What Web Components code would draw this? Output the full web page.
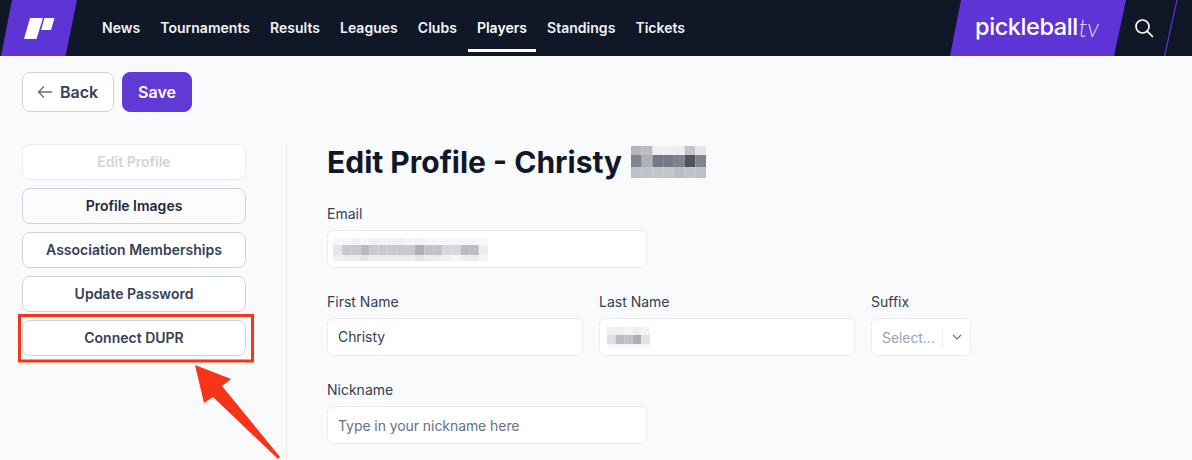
<!DOCTYPE html>
<html><head><meta charset="utf-8"><title>Edit Profile</title>
<style>
html,body{margin:0;padding:0;background:#f9fafb;height:460px;overflow:hidden;font-family:Inter,"Liberation Sans",sans-serif}
</style></head><body>
<app-header></app-header>
<page-toolbar></page-toolbar>
<profile-page></profile-page>
<call-out></call-out>
<script>
function def(name, html, after){
  customElements.define(name, class extends HTMLElement{
    connectedCallback(){
      if(this.shadowRoot) return;
      const r=this.attachShadow({mode:'open'});
      r.innerHTML=html;
      if(after) after(this,r);
    }
  });
}
function blur(w,rows){
  const h=rows.reduce((s,x)=>s+x[0],0);
  let s='',y=0;
  rows.forEach(([rh,cells])=>{
    const cw=w/cells.length;
    cells.forEach((c,i)=>{ s+=`<rect x="${(i*cw).toFixed(2)}" y="${y}" width="${cw.toFixed(2)}" height="${rh}" fill="${c}"/>`; });
    y+=rh;
  });
  return `<svg width="${w}" height="${h}" viewBox="0 0 ${w} ${h}" aria-hidden="true" style="display:block">${s}</svg>`;
}
def('app-header',`<style>
:host{display:flex;height:56px;background:#101828;align-items:stretch;color:#fff;position:relative;overflow:hidden}
.brand{width:77px;flex:none;display:flex}
nav{display:flex;gap:20px;padding-left:25px;font:600 14px/20px Inter,sans-serif;letter-spacing:.02px;flex:1}
nav a{display:flex;align-items:center;height:56px;box-sizing:border-box;position:relative;color:#f3f4f6}
nav a.on{color:#fff}
nav a.on::after{content:"";position:absolute;left:-9px;right:-9px;bottom:4px;height:3px;background:#fff}
.tv{width:176px;flex:none;background:#5f34d6;clip-path:polygon(11px 0,176px 0,164px 56px,0 56px);display:flex;align-items:center;padding:0 0 2px 25px;box-sizing:border-box}
.tv b{font:500 23.500px/24px Inter,sans-serif;letter-spacing:-.4px;color:#fff}
.tv i{font:300 italic 25px/24px Lato,sans-serif;color:#dcd2fa;margin-left:1px}
.search{width:66px;flex:none;display:flex;align-items:center;padding-left:7px;box-sizing:border-box}
.slash{position:absolute;right:14px;top:0}
</style>
<div class="brand"><svg width="77" height="56" viewBox="0 0 77 56"><polygon points="12,0 77,0 65.500,56 1,56" fill="#5f34d6"/><polygon points="30,18 43,18 36.500,39 24,39" fill="#fff"/><polygon points="44.500,18 54.500,18 51,30 41,30" fill="#fff"/></svg></div>
<nav><a>News</a><a>Tournaments</a><a>Results</a><a>Leagues</a><a>Clubs</a><a class="on">Players</a><a>Standings</a><a>Tickets</a></nav>
<div class="tv"><b>pickleball</b><i>tv</i></div>
<div class="search"><svg width="22" height="22" viewBox="0 0 22 22" fill="none" stroke="#fff" stroke-width="1.700"><circle cx="9.500" cy="9.500" r="6.500"/><path d="M14.300 14.300l5.200 5.200" stroke-linecap="round"/></svg></div>
<svg class="slash" width="14" height="56" viewBox="0 0 14 56"><path d="M13 0L.5 56" stroke="#5f34d6" stroke-width="1.200"/></svg>`);

def('page-toolbar',`<style>
:host{display:flex;gap:8px;padding:16px 22px 0;height:40px}
button{font:600 16px/24px Inter,sans-serif;height:40px;border-radius:8px;box-sizing:border-box;display:flex;align-items:center;padding:0;margin:0}
.back{width:92px;background:#fff;border:1px solid #d0d5dd;color:#344054;padding-left:14px;gap:7px}
.save{width:70px;background:#6139d5;border:1px solid #6139d5;color:#fff;justify-content:center}
</style>
<button class="back"><svg width="16" height="16" viewBox="0 0 16 16" fill="none" stroke="#667085" stroke-width="1.300"><path d="M15 8H1.500M7 2.500L1.500 8 7 13.500"/></svg>Back</button>
<button class="save">Save</button>`);

def('side-button',`<style>
:host{display:flex;align-items:center;justify-content:center;height:36px;box-sizing:border-box;background:#fff;border:1px solid #d0d5dd;border-radius:8px;font:600 14px/20px Inter,sans-serif;color:#344054}
:host([disabled]){color:#d0d5dd;border-color:#eaecf0}
:host([hover]){background:#fcfcfd;color:#1d2939}
</style><slot></slot>`);

def('field-box',`<style>
:host{display:flex;flex-direction:column;gap:6px;font:400 14px/20px Inter,sans-serif;color:#344054}
.i{display:flex;align-items:center;height:38px;box-sizing:border-box;background:#fff;border:1px solid #eaecf0;border-radius:6px;padding:0 10px;color:#344054;overflow:hidden;letter-spacing:-.07px}
:host([ph]) .i{color:#667085;padding-top:1px}
</style><label><slot name="label"></slot></label><div class="i"><slot></slot></div>`);

def('suffix-select',`<style>
:host{display:flex;flex-direction:column;gap:6px;font:400 14px/20px Inter,sans-serif;color:#344054;width:100px}
.i{display:flex;align-items:center;height:38px;box-sizing:border-box;background:#fff;border:1px solid #eaecf0;border-radius:6px;padding-left:10px;color:#98a2b3}
.t{flex:1;padding-top:1px;letter-spacing:-.07px}.sep{width:1px;height:20px;background:#eaecf0}
.c{width:27px;display:flex;justify-content:center}
</style><label>Suffix</label><div class="i"><span class="t">Select...</span><span class="sep"></span><span class="c"><svg width="10" height="6" viewBox="0 0 10 6" fill="none" stroke="#667085" stroke-width="1.100"><path d="M1 1l4 4 4-4"/></svg></span></div>`);

def('profile-form',`<style>
:host{display:flex;flex-direction:column;padding-left:40px;flex:1}
h1{font:700 30px/36px Inter,sans-serif;color:#101828;margin:0 0 24px;height:36px;display:flex;align-items:center;gap:9px}
.one{width:320px}
.row{display:flex;gap:16px}
.row field-box{width:256px}
.s{margin-bottom:24px}
#e{margin-left:-5px}
#l{margin-left:-3px}
</style>
<h1><span>Edit Profile - Christy</span><span id="n"></span></h1>
<field-box class="one s"><span slot="label">Email</span><span id="e"></span></field-box>
<div class="row s"><field-box><span slot="label">First Name</span>Christy</field-box><field-box><span slot="label">Last Name</span><span id="l"></span></field-box><suffix-select></suffix-select></div>
<field-box class="one" ph><span slot="label">Nickname</span>Type in your nickname here</field-box>`,(h,r)=>{
  r.getElementById('n').innerHTML=blur(75,[
    [9,['#b4b4bc','#bcbcc4','#efeff2','#efeff2','#eeeef1','#c4c4cc','#e6e6ea']],
    [12,['#7f8390','#aeb0ba','#767985','#767985','#80838f','#50525f','#7f8390']],
    [11,['#bfbfc7','#c2c2c9','#c4c4cb','#c4c4cb','#bcbcc4','#c2c2c9','#bfbfc7']]]);
  const f='#f6f6f8',g='#f1f1f4',k='#ececef',m='#e4e4e8';
  r.getElementById('e').innerHTML=blur(155,[
    [7,[f,f,g,f,g,g,g,g,f,g,f,f,f,f,f,f,'#f9f9fb']],
    [10,['#e6e6ea','#c8c8ce','#c8c8ce','#b8b8be','#c8c8cf','#c8c8cf','#c8c8cf','#c8c8cf','#c8c8cf','#b0b0b8','#c2c2c8','#c2c2c8','#d6d6da','#d6d6da','#bcbcc4','#bcbcc4','#eeeef0']],
    [6,[g,k,k,m,k,k,k,k,k,m,k,k,g,f,k,k,f]]]);
  r.getElementById('l').innerHTML=blur(43,[
    [8,['#f0f0f2','#eeeef0','#f4f4f5','#ececef','#f4f4f5']],
    [9,['#e0e0e4','#bcbcc4','#c0c0c6','#aeaeb6','#e2e2e6']],
    [4,['#f9f9fa','#f7f7f8','#f7f7f8','#f7f7f8','#f9f9fa']]]);
}); 

def('profile-page',`<style>
:host{display:flex;padding:32px 0 0 22px;height:316px;overflow:hidden}
aside{width:224px;flex:none;display:flex;flex-direction:column;gap:8px;padding-right:40px;border-right:1px solid #eaecf0}
</style>
<aside><side-button disabled>Edit Profile</side-button><side-button hover>Profile Images</side-button><side-button>Association Memberships</side-button><side-button>Update Password</side-button><side-button>Connect DUPR</side-button></aside>
<profile-form></profile-form>`);

def('call-out',`<style>
:host{position:absolute;left:0;top:0;width:1192px;height:460px;pointer-events:none}
svg{display:block}
</style>
<svg width="1192" height="460" viewBox="0 0 1192 460" fill="none"><rect x="19.500" y="315.500" width="233" height="45.500" stroke="#f5341a" stroke-width="3"/><polygon points="195,365 231,379 222,386 280,457 278,459 213,397 204,403" fill="#f5341a"/></svg>`);
</script>
</body></html>
